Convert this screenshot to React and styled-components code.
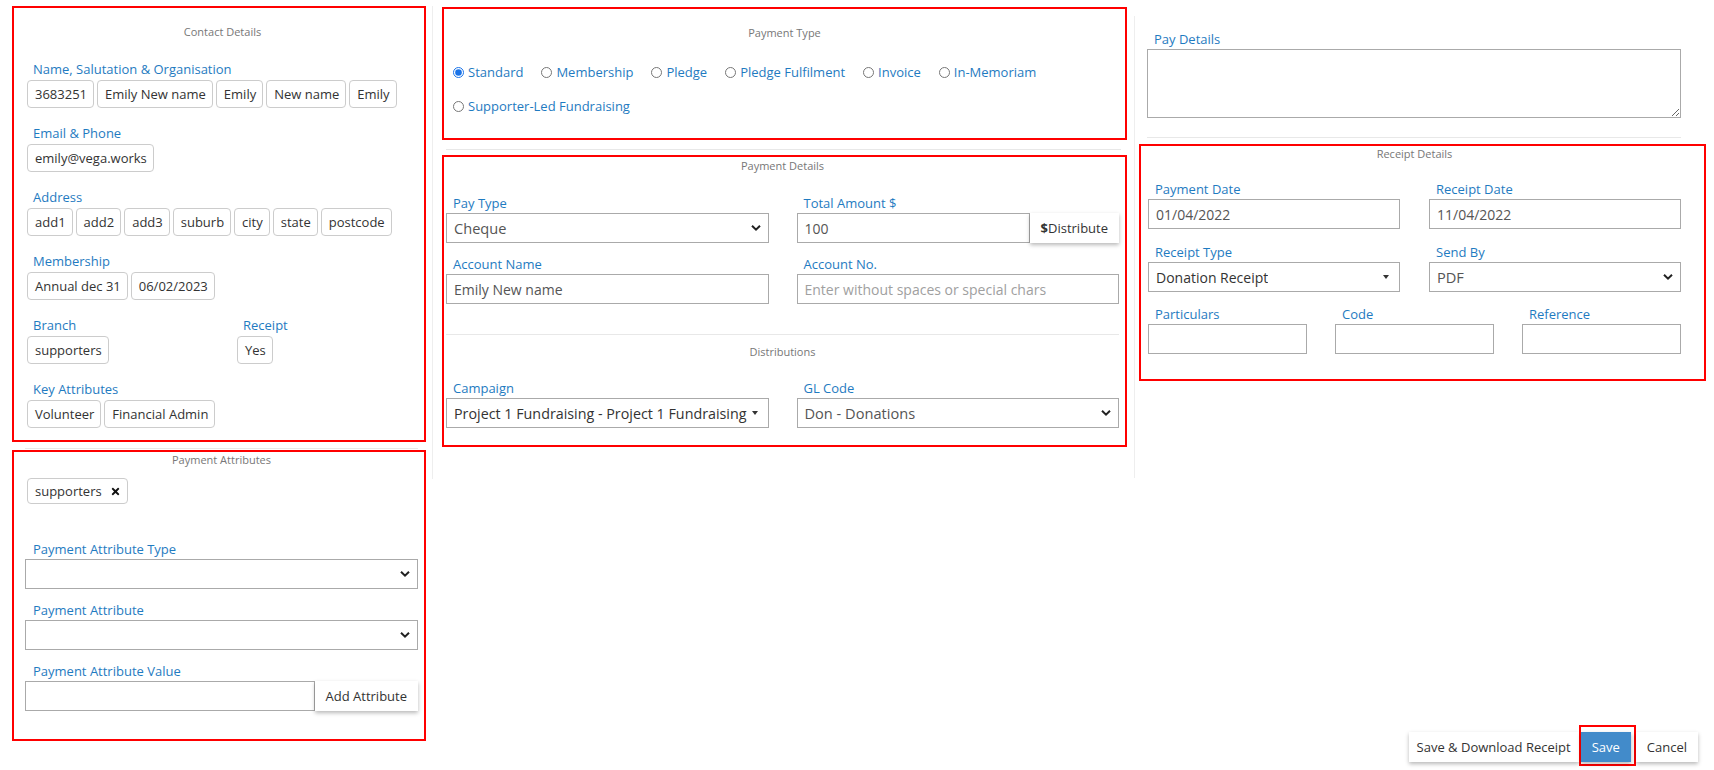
import React from "react";
import styled, { createGlobalStyle } from "styled-components";
import { FaTimes } from "react-icons/fa";

const GlobalStyle = createGlobalStyle`
  * { box-sizing: border-box; }
  body {
    margin: 0;
    background: #fff;
    font-family: "Open Sans", "Liberation Sans", sans-serif;
    color: #333;
  }
`;

const Page = styled.div`
  display: grid;
  grid-template-columns: 420px 702px 1fr;
  align-items: start;
  min-height: 770px;
  padding: 6px 0 4px 12px;
`;

const LeftColumn = styled.div`
  width: 414px;
`;

const MiddleColumn = styled.div`
  border-left: 1px solid #eee;
  padding: 1px 7px 32px 9px;
`;

const RightColumn = styled.div`
  align-self: stretch;
  display: flex;
  flex-direction: column;
`;

const RightPane = styled.div`
  margin-top: 10px;
  border-left: 1px solid #eee;
  padding: 14px 8px 97px 4px;
`;

const Panel = styled.section`
  border: 2px solid #ff0000;
  padding: ${(p) => p.$pad};
`;

const SectionTitle = styled.div`
  font-size: 11px;
  line-height: 16px;
  color: #777;
  text-align: center;
  padding-top: ${(p) => p.$top || 0}px;
  margin-bottom: ${(p) => p.$gap || 0}px;
`;

const FieldLabel = styled.div`
  font-size: 13px;
  line-height: 18px;
  color: #1f7bc1;
  white-space: nowrap;
  padding-left: ${(p) => (p.$indent === undefined ? 7 : p.$indent)}px;
  margin-bottom: ${(p) => (p.$gap === undefined ? 1 : p.$gap)}px;
`;

const Group = styled.div`
  & + & {
    margin-top: 16px;
  }
`;

const ChipRow = styled.div`
  display: flex;
  flex-wrap: wrap;
  gap: 3px;
`;

const Chip = styled.span`
  display: inline-flex;
  align-items: center;
  gap: 8px;
  height: ${(p) => p.$h || 28}px;
  padding: 0 6px 0 7px;
  border: 1px solid #ccc;
  border-radius: 4px;
  font-size: 13px;
  color: #333;
  background: #fff;
  white-space: nowrap;
`;

const SplitRow = styled.div`
  display: grid;
  grid-template-columns: 210px 1fr;
`;

const Rule = styled.div`
  height: 1px;
  background: #e8e8e8;
  margin: ${(p) => p.$m};
`;

const TextInput = styled.input`
  display: block;
  width: 100%;
  min-width: 0;
  height: 30px;
  border: 1px solid #aaa;
  border-radius: 0;
  padding: 0 7px;
  font-family: inherit;
  font-size: 14px;
  color: #555;
  background: #fff;
  outline: none;
  &::placeholder {
    color: #a0a0a0;
  }
`;

const SelectWrap = styled.div`
  position: relative;
`;

const NativeSelect = styled.select`
  display: block;
  width: 100%;
  height: 30px;
  appearance: none;
  border: 1px solid #aaa;
  border-radius: 0;
  padding: 0 26px 0 7px;
  font-family: inherit;
  font-size: 14.6px;
  color: #555;
  background: #fff;
  outline: none;
`;

const Chevron = styled.svg`
  position: absolute;
  right: 8px;
  top: 50%;
  transform: translateY(-50%);
  pointer-events: none;
`;

const Picker = styled.div`
  display: flex;
  align-items: center;
  justify-content: space-between;
  min-width: 0;
  height: 30px;
  border: 1px solid #aaa;
  padding: 0 ${(p) => p.$right || 10}px 0 7px;
  font-size: ${(p) => p.$fs || 14}px;
  color: #333;
  background: #fff;
`;

const PickerText = styled.span`
  min-width: 0;
  overflow: hidden;
  white-space: nowrap;
  text-overflow: clip;
`;

const Caret = styled.span`
  flex: none;
  width: 0;
  height: 0;
  margin-left: 1px;
  border-top: 4px solid #333;
  border-left: 3.5px solid transparent;
  border-right: 3.5px solid transparent;
`;

const InputGroup = styled.div`
  display: flex;
`;

const ShadowButton = styled.button`
  flex: none;
  height: 30px;
  padding: 0 ${(p) => p.$px || 11}px;
  border: none;
  border-radius: 0;
  font-family: inherit;
  font-size: 13px;
  color: ${(p) => (p.$primary ? "#fff" : "#333")};
  background: ${(p) => (p.$primary ? "#428bca" : "#fff")};
  box-shadow: 0 2px 4px rgba(0, 0, 0, 0.28);
  margin-top: ${(p) => p.$mt || 0}px;
  cursor: pointer;
  white-space: nowrap;
  b {
    font-weight: 700;
  }
`;

const RadioRow = styled.div`
  display: flex;
  flex-wrap: wrap;
  column-gap: 18px;
  row-gap: 16px;
`;

const RadioItem = styled.label`
  display: inline-flex;
  align-items: center;
  font-size: 13px;
  line-height: 18px;
  color: #1f7bc1;
  white-space: nowrap;
  input {
    width: 11px;
    height: 11px;
    margin: 0 4px 0 0;
    accent-color: #1a73e8;
  }
`;

const FormGrid = styled.div`
  display: grid;
  grid-template-columns: ${(p) => p.$cols || "minmax(0, 1fr) minmax(0, 1fr)"};
  column-gap: ${(p) => p.$cg || 28}px;
  row-gap: ${(p) => p.$rg || 12}px;
`;

const FieldBox = styled.div`
  min-width: 0;
`;

const PayDetailsBlock = styled.div`
  margin-left: 8px;
  width: 534px;
`;

const Notes = styled.textarea`
  display: block;
  width: 534px;
  height: 69px;
  border: 1px solid #aaa;
  border-radius: 0;
  resize: vertical;
  font-family: inherit;
  font-size: 14px;
  outline: none;
`;

const ReceiptPanel = styled(Panel)`
  width: 567px;
`;

const ReceiptInner = styled.div`
  width: 533px;
`;

const Footer = styled.div`
  margin-top: auto;
  margin-right: 16px;
  display: flex;
  justify-content: flex-end;
  align-items: flex-start;
`;

const Highlight = styled.div`
  border: 2px solid #ff0000;
  padding: 5px 3px 2px 0;
`;

const ChevronDown = () => (
  <Chevron width="10" height="7" viewBox="0 0 10 7">
    <path d="M1 1.2 L5 5.2 L9 1.2" fill="none" stroke="#222" strokeWidth="2" />
  </Chevron>
);

const Select = ({ value }) => (
  <SelectWrap>
    <NativeSelect defaultValue={value}>
      <option value={value || ""}>{value}</option>
    </NativeSelect>
    <ChevronDown />
  </SelectWrap>
);

const Field = ({ label, children, indent, gap }) => (
  <FieldBox>
    <FieldLabel $indent={indent} $gap={gap}>{label}</FieldLabel>
    {children}
  </FieldBox>
);

const ChipGroup = ({ label, items }) => (
  <div>
    <FieldLabel $indent={6} $gap={2}>{label}</FieldLabel>
    <ChipRow>
      {items.map((t, i) => (
        <Chip key={i}>{t}</Chip>
      ))}
    </ChipRow>
  </div>
);

const paymentTypes = [
  "Standard",
  "Membership",
  "Pledge",
  "Pledge Fulfilment",
  "Invoice",
  "In-Memoriam",
  "Supporter-Led Fundraising",
];

export default function App() {
  return (
    <>
      <GlobalStyle />
      <Page>
        <LeftColumn>
          <Panel $pad="0 6px 12px 13px">
            <SectionTitle $top={16} $gap={20}>Contact Details</SectionTitle>
            <Group>
              <ChipGroup
                label="Name, Salutation & Organisation"
                items={["3683251", "Emily New name", "Emily", "New name", "Emily"]}
              />
            </Group>
            <Group>
              <ChipGroup label="Email & Phone" items={["emily@vega.works"]} />
            </Group>
            <Group>
              <ChipGroup
                label="Address"
                items={["add1", "add2", "add3", "suburb", "city", "state", "postcode"]}
              />
            </Group>
            <Group>
              <ChipGroup label="Membership" items={["Annual dec 31", "06/02/2023"]} />
            </Group>
            <Group>
              <SplitRow>
                <ChipGroup label="Branch" items={["supporters"]} />
                <ChipGroup label="Receipt" items={["Yes"]} />
              </SplitRow>
            </Group>
            <Group>
              <ChipGroup label="Key Attributes" items={["Volunteer", "Financial Admin"]} />
            </Group>
          </Panel>

          <Rule $m="6px 8px 1px 13px" />

          <Panel $pad="0 6px 28px 11px">
            <SectionTitle $gap={10}>Payment Attributes</SectionTitle>
            <ChipRow style={{ marginLeft: 2, marginBottom: 36 }}>
              <Chip $h={26}>
                supporters
                <FaTimes size={11} color="#111" />
              </Chip>
            </ChipRow>
            <FormGrid $cols="minmax(0, 1fr)" $rg={12}>
              <Field label="Payment Attribute Type" indent={8}>
                <Select value="" />
              </Field>
              <Field label="Payment Attribute" indent={8}>
                <Select value="" />
              </Field>
              <Field label="Payment Attribute Value" indent={8}>
                <InputGroup>
                  <TextInput />
                  <ShadowButton>Add Attribute</ShadowButton>
                </InputGroup>
              </Field>
            </FormGrid>
          </Panel>
        </LeftColumn>

        <MiddleColumn>
          <Panel $pad="0 9px 23px 9px">
            <SectionTitle $top={16} $gap={22}>Payment Type</SectionTitle>
            <RadioRow>
              {paymentTypes.map((t, i) => (
                <RadioItem key={t}>
                  <input type="radio" name="ptype" defaultChecked={i === 0} />
                  {t}
                </RadioItem>
              ))}
            </RadioRow>
          </Panel>

          <Rule $m="9px 6px 5px 4px" />

          <Panel $pad="1px 6px 17px 2px">
            <SectionTitle $gap={20}>Payment Details</SectionTitle>
            <FormGrid>
              <Field label="Pay Type">
                <Select value="Cheque" />
              </Field>
              <Field label="Total Amount $">
                <InputGroup>
                  <TextInput defaultValue="100" />
                  <ShadowButton>
                    <b>$</b>Distribute
                  </ShadowButton>
                </InputGroup>
              </Field>
              <Field label="Account Name">
                <TextInput defaultValue="Emily New name" />
              </Field>
              <Field label="Account No.">
                <TextInput placeholder="Enter without spaces or special chars" />
              </Field>
            </FormGrid>
            <Rule $m="30px 0 9px" />
            <SectionTitle $gap={19}>Distributions</SectionTitle>
            <FormGrid>
              <Field label="Campaign">
                <Picker $right={10} $fs={14.3}>
                  <PickerText>Project 1 Fundraising - Project 1 Fundraising</PickerText>
                  <Caret />
                </Picker>
              </Field>
              <Field label="GL Code">
                <Select value="Don - Donations" />
              </Field>
            </FormGrid>
          </Panel>
        </MiddleColumn>

        <RightColumn>
          <RightPane>
            <PayDetailsBlock>
              <FieldLabel>Pay Details</FieldLabel>
              <Notes />
            </PayDetailsBlock>
            <Rule $m="19px 0 6px 8px" style={{ width: 534 }} />
            <ReceiptPanel $pad="0 0 25px 7px">
              <ReceiptInner>
                <SectionTitle $gap={18}>Receipt Details</SectionTitle>
                <FormGrid $cg={29} $rg={14}>
                  <Field label="Payment Date">
                    <TextInput defaultValue="01/04/2022" />
                  </Field>
                  <Field label="Receipt Date">
                    <TextInput defaultValue="11/04/2022" />
                  </Field>
                  <Field label="Receipt Type">
                    <Picker $right={10}>
                      <PickerText>Donation Receipt</PickerText>
                      <Caret />
                    </Picker>
                  </Field>
                  <Field label="Send By">
                    <Select value="PDF" />
                  </Field>
                </FormGrid>
                <FormGrid
                  $cols="repeat(3, minmax(0, 1fr))"
                  $cg={28}
                  style={{ marginTop: 13 }}
                >
                  <Field label="Particulars">
                    <TextInput />
                  </Field>
                  <Field label="Code">
                    <TextInput />
                  </Field>
                  <Field label="Reference">
                    <TextInput />
                  </Field>
                </FormGrid>
              </ReceiptInner>
            </ReceiptPanel>
          </RightPane>

          <Footer>
            <ShadowButton $px={8} $mt={7}>Save &amp; Download Receipt</ShadowButton>
            <Highlight>
              <ShadowButton $px={11} $primary>Save</ShadowButton>
            </Highlight>
            <ShadowButton $px={11} $mt={7}>Cancel</ShadowButton>
          </Footer>
        </RightColumn>
      </Page>
    </>
  );
}
